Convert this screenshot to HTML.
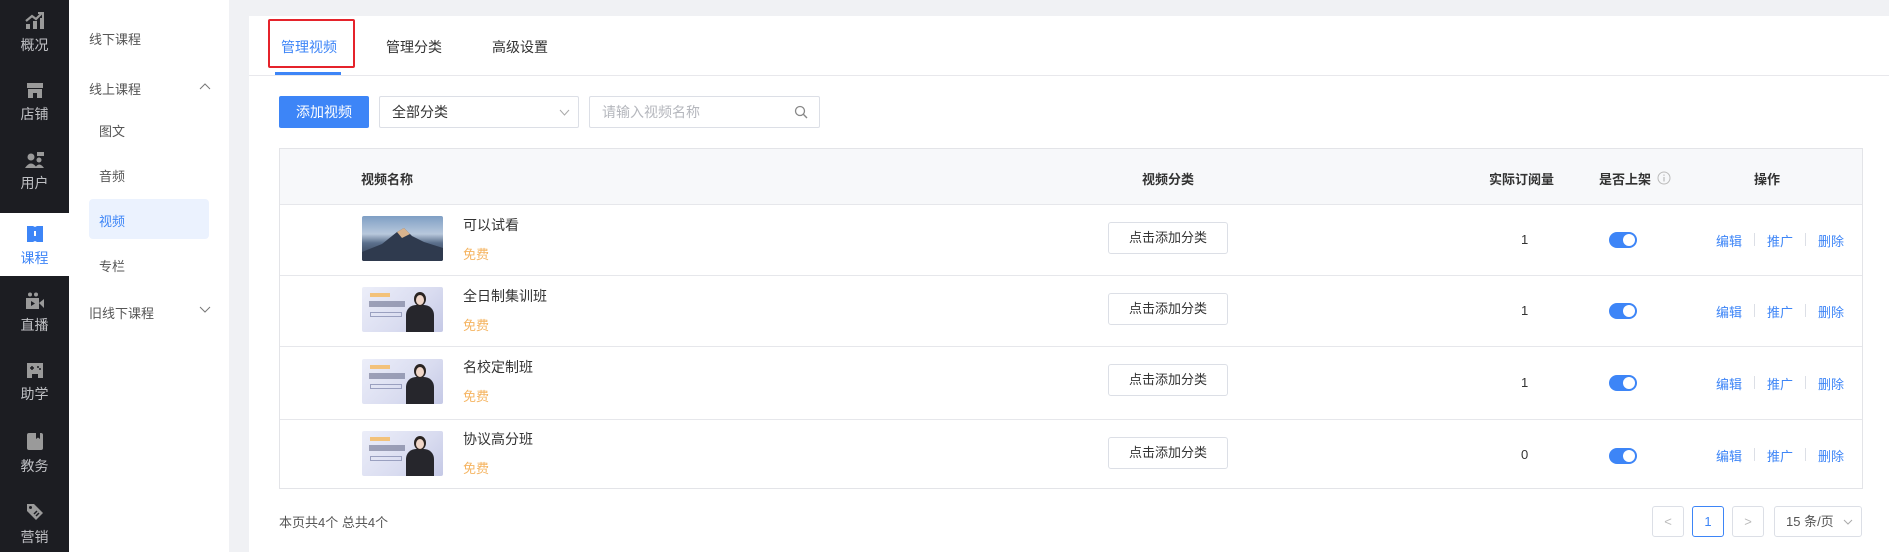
<!DOCTYPE html>
<html><head><meta charset="utf-8"><style>
*{margin:0;padding:0;box-sizing:border-box}
body{width:1889px;height:552px;overflow:hidden;background:#f0f1f4;font-family:"Liberation Sans","Noto Sans CJK SC",sans-serif;position:relative;color:#333}
.abs{position:absolute}
.nav{left:0;top:0;width:69px;height:552px;background:#1c1d22}
.ni{position:absolute;left:0;width:69px;text-align:center;color:#bfc0c4;font-size:14px}
.ni svg{display:block;margin:0 auto}
.active{background:#fff;color:#3d85f7}
.sub{left:69px;top:0;width:160px;height:552px;background:#fff}
.si{position:absolute;font-size:13px;color:#555;white-space:nowrap}
.main{left:249px;top:16px;width:1640px;height:536px;background:#fff}
.tab{position:absolute;top:21px;font-size:14px;color:#333}
.th{position:absolute;font-size:13px;color:#333;font-weight:bold}
.td{position:absolute;font-size:13px;color:#333}
.free{position:absolute;font-size:13px;color:#f5b461}
.btn{position:absolute;border:1px solid #dcdfe6;border-radius:3px;background:#fff;font-size:13px;color:#333;text-align:center;line-height:30px}
.tog{position:absolute;width:28px;height:16px;border-radius:8px;background:#3d85f7}
.tog:after{content:"";position:absolute;right:2px;top:2px;width:12px;height:12px;border-radius:50%;background:#fff}
.lk{position:absolute;font-size:13px;color:#3d85f7}
.sep{position:absolute;width:1px;height:13px;background:#dcdfe6}
.line{position:absolute;left:0;width:1583px;height:1px;background:#e6e7eb}
.thumb{position:absolute;left:82px;width:81px;height:45px;border-radius:2px;overflow:hidden}
.lav{background:linear-gradient(135deg,#eceef9,#d9dcf0 60%,#c5c9e6)}
.lav .tag{position:absolute;left:8px;top:6px;width:20px;height:4px;background:#f3c27a}
.lav .t1{position:absolute;left:7px;top:14px;width:36px;height:6px;background:#6b6f8e;opacity:.6}
.lav .t2{position:absolute;left:8px;top:25px;width:32px;height:5px;border:1px solid #9aa0c0}
.lav .hd{position:absolute;left:52px;top:5px;width:12px;height:14px;border-radius:50%;background:#2a2422}
.lav .bd{position:absolute;left:44px;top:18px;width:28px;height:30px;border-radius:10px 10px 0 0;background:#26262c}
.lav .fc{position:absolute;left:54px;top:8px;width:8px;height:10px;border-radius:50%;background:#f0d6c8}
</style></head><body>
<div class="abs nav">
  <div class="ni" style="top:12px"><svg width="20" height="18" viewBox="0 0 20 18"><rect x="1" y="12" width="4" height="5" fill="#9a9a9a"/><rect x="8" y="9" width="4" height="8" fill="#9a9a9a"/><rect x="15" y="6" width="4" height="11" fill="#9a9a9a"/><path d="M1 9 L7 4 L11 7 L17 1" stroke="#9a9a9a" stroke-width="2.2" fill="none"/><path d="M13 1 H18 V6" stroke="#9a9a9a" stroke-width="2" fill="none"/></svg><div style="margin-top:5px">概况</div></div>
  <div class="ni" style="top:82px"><svg width="18" height="17" viewBox="0 0 18 17"><path d="M1 1 H17 V6 H1Z" fill="#9a9a9a"/><path d="M2 7 H16 V16 H11 V11 H7 V16 H2Z" fill="#9a9a9a"/></svg><div style="margin-top:5px">店铺</div></div>
  <div class="ni" style="top:151px"><svg width="20" height="18" viewBox="0 0 20 18"><circle cx="6" cy="6" r="3.5" fill="#9a9a9a"/><path d="M0 17 Q6 8 12 17Z" fill="#9a9a9a"/><rect x="12" y="1" width="7" height="4" fill="#9a9a9a"/><circle cx="14" cy="9" r="2.5" fill="#9a9a9a"/><path d="M10 17 Q14 10 19 17Z" fill="#9a9a9a"/></svg><div style="margin-top:4px">用户</div></div>
  <div class="ni active" style="top:213px;height:63px;padding-top:12px"><svg width="18" height="18" viewBox="0 0 18 18"><path d="M1 1 H7 L9 2 L11 1 H17 V17 H11 L9 16 L7 17 H1Z" fill="#3d85f7"/><rect x="8" y="6" width="2" height="5" fill="#fff"/></svg><div style="margin-top:5px">课程</div></div>
  <div class="ni" style="top:292px"><svg width="20" height="18" viewBox="0 0 20 18"><circle cx="5" cy="2.5" r="2" fill="#9a9a9a"/><circle cx="11" cy="2.5" r="2" fill="#9a9a9a"/><rect x="1" y="6" width="13" height="11" fill="#9a9a9a"/><path d="M14 11 L19 7 V16Z" fill="#9a9a9a"/><path d="M6 9 L10 11.5 L6 14Z" fill="#1c1d22"/></svg><div style="margin-top:5px">直播</div></div>
  <div class="ni" style="top:362px"><svg width="18" height="17" viewBox="0 0 18 17"><path d="M1 1 H17 V16 H12 V12 H6 V16 H1Z" fill="#9a9a9a"/><path d="M4 6 H8 M6 4 V8" stroke="#1c1d22" stroke-width="1.5"/><circle cx="12" cy="5" r="1" fill="#1c1d22"/><circle cx="14" cy="7" r="1" fill="#1c1d22"/></svg><div style="margin-top:5px">助学</div></div>
  <div class="ni" style="top:432px"><svg width="18" height="19" viewBox="0 0 18 19"><rect x="1" y="1" width="16" height="17" rx="2" fill="#9a9a9a"/><path d="M10 1 V7 L12 5.5 L14 7 V1Z" fill="#1c1d22"/></svg><div style="margin-top:5px">教务</div></div>
  <div class="ni" style="top:502px"><svg width="20" height="20" viewBox="0 0 20 20"><path d="M2 2 H9 L18 11 L11 18 L2 9Z" fill="#9a9a9a"/><circle cx="5.5" cy="5.5" r="1.5" fill="#1c1d22"/><path d="M9 12 L12 9 M11 14 L14 11" stroke="#1c1d22" stroke-width="1.5"/></svg><div style="margin-top:5px">营销</div></div>
</div>
<div class="abs sub">
  <div class="si" style="left:20px;top:29px">线下课程</div>
  <div class="si" style="left:20px;top:79px">线上课程</div>
  <svg class="abs" style="left:130px;top:82px" width="12" height="8" viewBox="0 0 12 8"><path d="M1 7 L6 2 L11 7" stroke="#777" fill="none"/></svg>
  <div class="si" style="left:30px;top:121px">图文</div>
  <div class="si" style="left:30px;top:166px">音频</div>
  <div class="abs" style="left:20px;top:199px;width:120px;height:40px;border-radius:4px;background:#ebf2fe"></div>
  <div class="si" style="left:30px;top:211px;color:#3d85f7">视频</div>
  <div class="si" style="left:30px;top:256px">专栏</div>
  <div class="si" style="left:20px;top:303px">旧线下课程</div>
  <svg class="abs" style="left:130px;top:306px" width="12" height="8" viewBox="0 0 12 8"><path d="M1 1 L6 6 L11 1" stroke="#777" fill="none"/></svg>
</div>
<div class="abs main">
  <div class="tab" style="left:32px;color:#3d85f7">管理视频</div>
  <div class="tab" style="left:137px">管理分类</div>
  <div class="tab" style="left:243px">高级设置</div>
  <div class="abs" style="left:19px;top:3px;width:87px;height:49px;border:2px solid #e5232b;border-radius:2px"></div>
  <div class="abs" style="left:26px;top:56px;width:66px;height:3px;background:#3d85f7"></div>
  <div class="abs" style="left:0;top:59px;width:1640px;height:1px;background:#e8e8ec"></div>
  <div class="abs" style="left:30px;top:80px;width:90px;height:32px;background:#3d85f7;border-radius:2px;color:#fff;font-size:14px;text-align:center;line-height:32px">添加视频</div>
  <div class="abs" style="left:130px;top:80px;width:200px;height:32px;border:1px solid #dcdfe6;border-radius:2px;font-size:14px;line-height:30px;padding-left:12px">全部分类</div>
  <svg class="abs" style="left:310px;top:93px" width="11" height="7" viewBox="0 0 11 7"><path d="M1 1 L5.5 6 L10 1" stroke="#aaa" fill="none"/></svg>
  <div class="abs" style="left:340px;top:80px;width:231px;height:32px;border:1px solid #dcdfe6;border-radius:2px;font-size:14px;line-height:30px;padding-left:12px;color:#b5b7bd">请输入视频名称</div>
  <svg class="abs" style="left:545px;top:89px" width="14" height="14" viewBox="0 0 14 14"><circle cx="6" cy="6" r="4.5" stroke="#888" stroke-width="1.3" fill="none"/><path d="M9.3 9.3 L13 13" stroke="#888" stroke-width="1.4"/></svg>
  <div class="abs" style="left:30px;top:132px;width:1584px;height:341px;border:1px solid #e3e4e8;overflow:hidden">
    <div class="abs" style="left:0;top:0;width:1584px;height:55px;background:#f7f8fa"></div>
    <div class="th" style="left:81px;top:20px">视频名称</div>
    <div class="th" style="left:862px;top:20px">视频分类</div>
    <div class="th" style="left:1209px;top:20px">实际订阅量</div>
    <div class="th" style="left:1319px;top:20px">是否上架</div>
    <svg class="abs" style="left:1377px;top:22px" width="14" height="14" viewBox="0 0 14 14"><circle cx="7" cy="7" r="6" stroke="#bbb" fill="none"/><rect x="6.4" y="6" width="1.2" height="4.5" fill="#bbb"/><rect x="6.4" y="3.5" width="1.2" height="1.3" fill="#bbb"/></svg>
    <div class="th" style="left:1474px;top:20px">操作</div>
    <div class="line" style="top:55px"></div>
    <div class="line" style="top:126px"></div>
    <div class="line" style="top:197px"></div>
    <div class="line" style="top:270px"></div>

    <div class="thumb" style="top:67px;background:linear-gradient(180deg,#7f9fc4 0%,#b8c8dc 40%,#5b6f8c 60%,#2b3446 100%)"><svg width="81" height="45" viewBox="0 0 81 45"><path d="M0 45 L0 36 L20 28 L35 16 L42 12 L50 20 L62 26 L81 32 L81 45Z" fill="#2f3a4e"/><path d="M35 16 L42 12 L48 18 L40 22Z" fill="#d9b38d"/></svg></div>
    <div class="td" style="left:183px;top:66px;font-size:14px">可以试看</div>
    <div class="free" style="left:183px;top:95px">免费</div>
    <div class="btn" style="left:828px;top:73px;width:120px;height:32px">点击添加分类</div>
    <div class="td" style="left:1241px;top:83px">1</div>
    <div class="tog" style="left:1329px;top:83px"></div>
    <div class="lk" style="left:1436px;top:82px">编辑</div><div class="sep" style="left:1474px;top:84px"></div>
    <div class="lk" style="left:1487px;top:82px">推广</div><div class="sep" style="left:1525px;top:84px"></div>
    <div class="lk" style="left:1538px;top:82px">删除</div>

    <div class="thumb lav" style="top:138px"><div class="tag"></div><div class="t1"></div><div class="t2"></div><div class="bd"></div><div class="hd"></div><div class="fc"></div></div>
    <div class="td" style="left:183px;top:137px;font-size:14px">全日制集训班</div>
    <div class="free" style="left:183px;top:166px">免费</div>
    <div class="btn" style="left:828px;top:144px;width:120px;height:32px">点击添加分类</div>
    <div class="td" style="left:1241px;top:154px">1</div>
    <div class="tog" style="left:1329px;top:154px"></div>
    <div class="lk" style="left:1436px;top:153px">编辑</div><div class="sep" style="left:1474px;top:155px"></div>
    <div class="lk" style="left:1487px;top:153px">推广</div><div class="sep" style="left:1525px;top:155px"></div>
    <div class="lk" style="left:1538px;top:153px">删除</div>

    <div class="thumb lav" style="top:210px"><div class="tag"></div><div class="t1"></div><div class="t2"></div><div class="bd"></div><div class="hd"></div><div class="fc"></div></div>
    <div class="td" style="left:183px;top:208px;font-size:14px">名校定制班</div>
    <div class="free" style="left:183px;top:237px">免费</div>
    <div class="btn" style="left:828px;top:215px;width:120px;height:32px">点击添加分类</div>
    <div class="td" style="left:1241px;top:226px">1</div>
    <div class="tog" style="left:1329px;top:226px"></div>
    <div class="lk" style="left:1436px;top:225px">编辑</div><div class="sep" style="left:1474px;top:227px"></div>
    <div class="lk" style="left:1487px;top:225px">推广</div><div class="sep" style="left:1525px;top:227px"></div>
    <div class="lk" style="left:1538px;top:225px">删除</div>

    <div class="thumb lav" style="top:282px"><div class="tag"></div><div class="t1"></div><div class="t2"></div><div class="bd"></div><div class="hd"></div><div class="fc"></div></div>
    <div class="td" style="left:183px;top:280px;font-size:14px">协议高分班</div>
    <div class="free" style="left:183px;top:309px">免费</div>
    <div class="btn" style="left:828px;top:288px;width:120px;height:32px">点击添加分类</div>
    <div class="td" style="left:1241px;top:298px">0</div>
    <div class="tog" style="left:1329px;top:299px"></div>
    <div class="lk" style="left:1436px;top:297px">编辑</div><div class="sep" style="left:1474px;top:299px"></div>
    <div class="lk" style="left:1487px;top:297px">推广</div><div class="sep" style="left:1525px;top:299px"></div>
    <div class="lk" style="left:1538px;top:297px">删除</div>
  </div>
  <div class="td" style="left:30px;top:496px;color:#555">本页共4个 总共4个</div>
  <div class="btn" style="left:1403px;top:490px;width:32px;height:31px;color:#bbb;line-height:29px">&lt;</div>
  <div class="btn" style="left:1443px;top:490px;width:32px;height:31px;color:#3d85f7;border-color:#3d85f7;line-height:29px">1</div>
  <div class="btn" style="left:1483px;top:490px;width:32px;height:31px;color:#bbb;line-height:29px">&gt;</div>
  <div class="btn" style="left:1525px;top:490px;width:88px;height:31px;color:#555;line-height:29px;text-align:left;padding-left:11px">15 条/页</div>
  <svg class="abs" style="left:1594px;top:503px" width="10" height="6" viewBox="0 0 10 6"><path d="M1 1 L5 5 L9 1" stroke="#aaa" fill="none"/></svg>
</div>
</body></html>
